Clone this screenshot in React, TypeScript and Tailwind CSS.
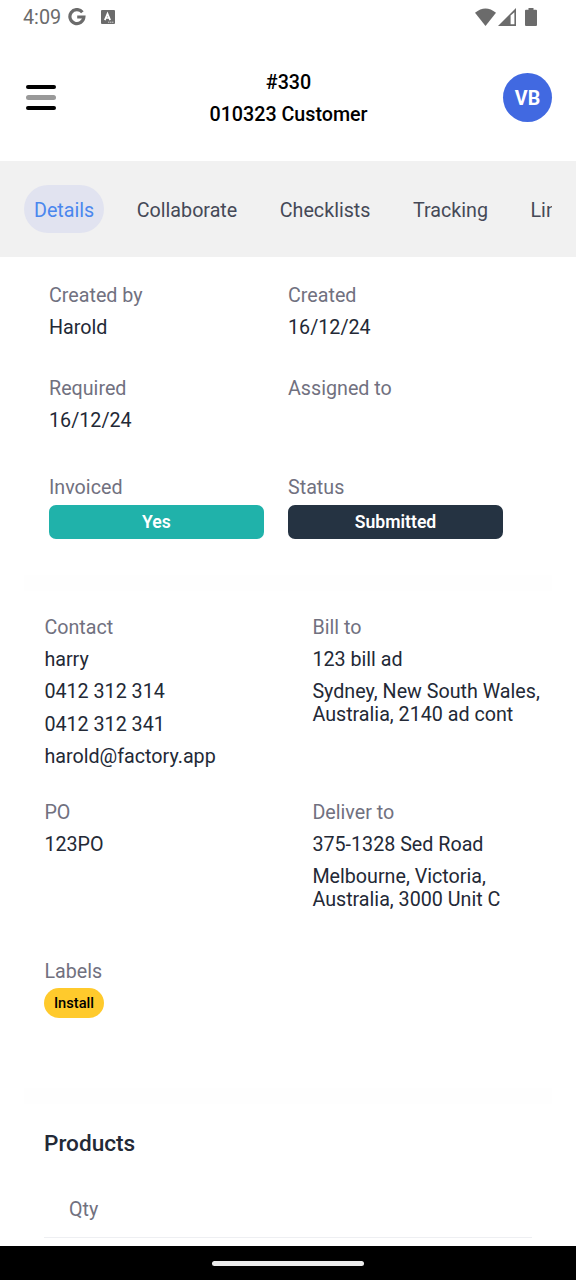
import { useState } from "react";

const tabs = ["Details", "Collaborate", "Checklists", "Tracking", "Links"];

function StatusBar() {
    return (
        <div className="flex h-[34px] items-center justify-between pl-[23px] pr-[39px] text-[#6b6b6b]">
            <div className="flex items-center">
                <span className="w-[45px] pt-px text-[19.8px] leading-[33px]">4:09</span>
                <svg className="h-[18px] w-[18px]" viewBox="0 0 18 18" fill="none" stroke="currentColor" strokeWidth="3.2">
                    <path d="M14.4 4.2A7 7 0 1 0 15.9 9H9.2" />
                </svg>
                <svg className="ml-[15px] h-[14px] w-[14px]" viewBox="0 0 14 14">
                    <rect width="14" height="14" rx="1" fill="currentColor" />
                    <path d="M3.8 10.2L6.5 3.8L9.2 10.2M4.8 8H8.2" fill="none" stroke="white" strokeWidth="1.7" />
                    <path d="M7.3 12.2h1M9.3 12.2h1M11.3 12.2h1" stroke="white" strokeWidth="1" />
                </svg>
            </div>
            <div className="flex items-center">
                <svg className="h-[18px] w-[21px]" viewBox="0 0 21 18">
                    <path d="M0 4.8Q10.5 -3.8 21 4.8L10.5 18Z" fill="currentColor" />
                </svg>
                <svg className="ml-[2px] h-[18px] w-[18px]" viewBox="0 0 18 18">
                    <path d="M0 18L18 0V18Z" fill="currentColor" />
                    <path d="M12.6 7.6L16.4 4.2V16.2H12.6Z" fill="white" />
                </svg>
                <svg className="ml-[9px] h-[18px] w-[12px]" viewBox="0 0 12 18">
                    <path d="M3.5 0h5v1.7H11a1 1 0 0 1 1 1V17a1 1 0 0 1-1 1H1a1 1 0 0 1-1-1V2.7a1 1 0 0 1 1-1h2.5Z" fill="currentColor" />
                </svg>
            </div>
        </div>
    );
}

function Field({ label, lines = [] }: { label: string; lines?: string[] }) {
    return (
        <div className="flex flex-col gap-[9.2px]">
            <div className="text-[#71717f]">{label}</div>
            {lines.map((line) => (
                <div key={line}>{line}</div>
            ))}
        </div>
    );
}

function App() {
    const [active, setActive] = useState("Details");

    return (
        <div className="flex h-[1280px] w-[576px] flex-col overflow-hidden bg-white font-['Roboto',sans-serif] text-[19.7px] leading-[23px] text-[#232936]">
            <StatusBar />

            {/* Header */}
            <header className="flex h-[127px] items-center justify-between pl-[26px] pr-6 text-black">
                <button className="flex w-[48px] flex-col gap-[6px]">
                    <span className="h-[4.5px] w-[30px] rounded-full bg-black" />
                    <span className="h-[4.5px] w-[30px] rounded-full bg-[#999999]" />
                    <span className="h-[4.5px] w-[30px] rounded-full bg-black" />
                </button>
                <div className="flex flex-col gap-[9px] pt-[2px] text-center font-medium">
                    <div>#330</div>
                    <div>010323 Customer</div>
                </div>
                <div className="flex h-[49px] w-[49px] items-center justify-center rounded-full bg-[#4169e1] pt-[2px] text-[19.6px] font-bold text-white">
                    VB
                </div>
            </header>

            {/* Tabs */}
            <nav className="h-24 bg-[#f1f1f1] px-6 pt-6">
                <div className="flex gap-[22.5px] overflow-hidden text-[#454957]">
                    {tabs.map((tab) => (
                        <button
                            key={tab}
                            className={
                                tab === active
                                    ? "h-[48px] shrink-0 rounded-3xl bg-[#e1e3f0] px-[10px] pt-[2px] text-[#4a87ee]"
                                    : "h-[48px] shrink-0 px-[10px] pt-[2px]"
                            }
                            onClick={() => { setActive(tab); }}
                        >
                            {tab}
                        </button>
                    ))}
                </div>
            </nav>

            {/* Order summary */}
            <section className="grid h-[318px] grid-cols-[215px_215px] grid-rows-[93px_99px_auto] gap-x-6 pl-[49px] pt-[27px]">
                <Field label="Created by" lines={["Harold"]} />
                <Field label="Created" lines={["16/12/24"]} />
                <Field label="Required" lines={["16/12/24"]} />
                <Field label="Assigned to" />
                <div>
                    <div className="text-[#71717f]">Invoiced</div>
                    <div className="mt-[5.5px] flex h-[34px] items-center justify-center rounded-[7px] bg-[#20b2aa] pt-px text-[17.6px] font-semibold text-white">
                        Yes
                    </div>
                </div>
                <div>
                    <div className="text-[#71717f]">Status</div>
                    <div className="mt-[5.5px] flex h-[34px] items-center justify-center rounded-[7px] bg-[#253342] pt-px text-[17.6px] font-semibold text-white">
                        Submitted
                    </div>
                </div>
            </section>
            <div className="mx-6 h-4 shrink-0 bg-[#fefefe]" />

            {/* Contact and addresses */}
            <section className="grid h-[497px] shrink-0 grid-cols-[244px_236px] grid-rows-[185px_158px_auto] gap-x-6 pl-[44.4px] pt-[25px]">
                <Field label="Contact" lines={["harry", "0412 312 314", "0412 312 341", "harold@factory.app"]} />
                <Field label="Bill to" lines={["123 bill ad", "Sydney, New South Wales, Australia, 2140 ad cont"]} />
                <Field label="PO" lines={["123PO"]} />
                <Field label="Deliver to" lines={["375-1328 Sed Road", "Melbourne, Victoria, Australia, 3000 Unit C"]} />
                <div className="flex flex-col items-start pt-px">
                    <div className="text-[#71717f]">Labels</div>
                    <div className="mt-[5px] flex h-[30px] items-center rounded-full bg-[#ffca2c] px-[9.5px] text-[14.7px] font-medium text-black">
                        Install
                    </div>
                </div>
            </section>
            <div className="mx-6 h-4 shrink-0 bg-[#fefefe]" />

            {/* Products */}
            <section className="h-[142px] shrink-0 px-[44px] pt-[27px]">
                <h2 className="text-[22.6px] font-medium leading-[26px]">Products</h2>
                <div className="mt-7 flex h-[53px] items-center border-b border-[#eeeff2] px-[25px] pb-1 text-[#71717f]">
                    Qty
                </div>
            </section>

            {/* Gesture bar */}
            <div className="flex h-[34px] shrink-0 items-center justify-center bg-black">
                <div className="h-[5px] w-[152px] rounded-full bg-[#ececec]" />
            </div>
        </div>
    );
}

export default App;
